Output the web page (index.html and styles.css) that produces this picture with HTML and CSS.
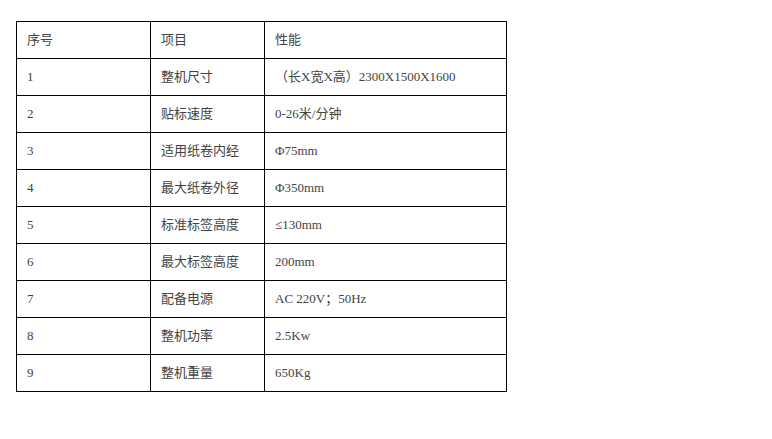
FILE: index.html
```html
<!DOCTYPE html>
<html lang="zh">
<head>
<meta charset="utf-8">
<link rel="stylesheet" href="styles.css">
</head>
<body>
<table class="spec">
  <colgroup><col class="c1"><col class="c2"><col class="c3"></colgroup>
  <tr><td>序号</td><td>项目</td><td>性能</td></tr>
  <tr><td>1</td><td>整机尺寸</td><td>（长X宽X高）2300X1500X1600</td></tr>
  <tr><td>2</td><td>贴标速度</td><td>0-26米/分钟</td></tr>
  <tr><td>3</td><td>适用纸卷内经</td><td>Φ75mm</td></tr>
  <tr><td>4</td><td>最大纸卷外径</td><td>Φ350mm</td></tr>
  <tr><td>5</td><td>标准标签高度</td><td>≤130mm</td></tr>
  <tr><td>6</td><td>最大标签高度</td><td>200mm</td></tr>
  <tr><td>7</td><td>配备电源</td><td>AC 220V；50Hz</td></tr>
  <tr><td>8</td><td>整机功率</td><td>2.5Kw</td></tr>
  <tr><td>9</td><td>整机重量</td><td>650Kg</td></tr>
</table>
</body>
</html>
```
FILE: styles.css
```css
html, body {
  margin: 0;
  padding: 0;
  background: #fff;
}
body {
  padding: 21px 0 0 16px;
  font-family: "Liberation Serif", "Noto Sans CJK SC", serif;
  font-size: 13px;
  color: #444;
}
.spec {
  border-collapse: collapse;
  width: 490px;
  table-layout: fixed;
}
.c1 { width: 134px; }
.c2 { width: 114px; }
.c3 { width: 242px; }
.spec td {
  border: 1px solid #000;
  height: 36px;
  padding: 0 0 0 10px;
  box-sizing: border-box;
  vertical-align: middle;
  line-height: 16px;
  white-space: nowrap;
}
.spec tr {
  height: 37px;
}
```
